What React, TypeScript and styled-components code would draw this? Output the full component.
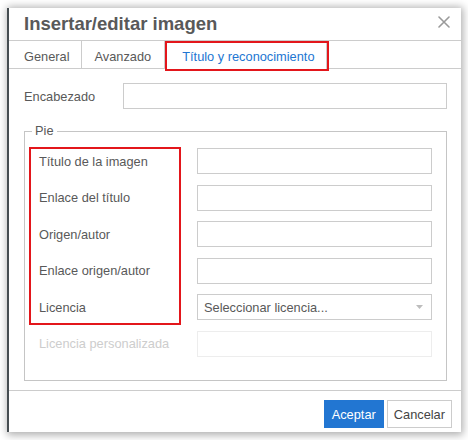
import styled, { createGlobalStyle } from 'styled-components';

const GlobalStyle = createGlobalStyle`
  html, body {
    margin: 0;
    background: #fff;
  }
  body {
    font-family: 'Liberation Sans', Arial, sans-serif;
    font-size: 12.8px;
    color: #595959;
  }
`;

const Page = styled.div`
  padding: 8px 7px 0 9px;
  height: 440px;
  box-sizing: border-box;
`;

const Dialog = styled.div`
  width: 452px;
  height: 424px;
  background: #fff;
  display: flex;
  flex-direction: column;
  box-shadow: -2px 0 0 #464d51, 0 1px 8px 2px rgba(0, 0, 0, 0.32);
`;

const Header = styled.div`
  display: flex;
  align-items: center;
  justify-content: space-between;
  height: 32px;
  padding: 0 11px 0 15px;
  border-bottom: 1px solid #cccccc;
`;

const Title = styled.h1`
  margin: 0;
  font-size: 18.5px;
  font-weight: bold;
  line-height: 32px;
  color: #595959;
`;

const CloseButton = styled.button`
  border: 0;
  background: none;
  padding: 0;
  width: 12px;
  height: 12px;
  margin-top: -4px;
  display: flex;
  cursor: pointer;
`;

const TabBar = styled.div`
  display: flex;
  align-items: flex-start;
  border-bottom: 1px solid #cccccc;
`;

const Tab = styled.div<{ $active?: boolean }>`
  height: 27px;
  box-sizing: border-box;
  padding: 8px ${(p) => (p.$active ? '14.5px' : '13px')} 4px;
  line-height: 15px;
  border-right: 1px solid #cccccc;
  color: ${(p) => (p.$active ? '#2276d2' : '#595959')};
  background: #fff;
  white-space: nowrap;
  &:first-child {
    padding-left: 15px;
    padding-right: 11px;
  }
`;

const TabHighlight = styled.div`
  border: 2px solid #e3161b;
  margin-bottom: -3px;
  height: 30px;
  box-sizing: border-box;
  background: #fff;
  & > div {
    height: 26px;
    padding-top: 6px;
  }
`;

const Body = styled.div`
  flex: 1;
  padding: 14px 14px 9px 15px;
  display: flex;
  flex-direction: column;
`;

const FormRow = styled.div`
  display: flex;
  align-items: center;
`;

const RowLabel = styled.label`
  width: 99px;
  flex-shrink: 0;
`;

const TextInput = styled.input`
  box-sizing: border-box;
  height: 26px;
  width: 100%;
  margin: 0;
  border: 1px solid #cccccc;
  border-radius: 0;
  background: #fff;
  font: inherit;
  padding: 0 5px;
  outline: none;
  &:disabled {
    border-color: #ededed;
    background: #fff;
  }
`;

const Fieldset = styled.fieldset`
  margin: 14px 0 0;
  padding: 9px 14px 23px;
  border: 1px solid #c5c5c5;
  min-width: 0;
`;

const Legend = styled.legend`
  margin-left: -7px;
  padding: 0 3px;
  line-height: 16px;
  color: #595959;
`;

const FieldGrid = styled.div`
  display: grid;
  grid-template-columns: 158px 235px;
  grid-auto-rows: 26px;
  row-gap: 10.6px;
`;

const LabelHighlight = styled.div`
  grid-column: 1;
  grid-row: 1 / 6;
  margin: -1px 16px -5px -10px;
  border: 2px solid #e3161b;
  pointer-events: none;
`;

const FieldLabel = styled.label<{ $row: number; $disabled?: boolean }>`
  grid-column: 1;
  grid-row: ${(p) => p.$row};
  align-self: center;
  color: ${(p) => (p.$disabled ? '#cdcdcd' : '#595959')};
`;

const FieldControl = styled.div<{ $row: number }>`
  grid-column: 2;
  grid-row: ${(p) => p.$row};
`;

const SelectBox = styled.div`
  box-sizing: border-box;
  height: 26px;
  border: 1px solid #cccccc;
  display: flex;
  align-items: center;
  justify-content: space-between;
  padding: 0 8px 0 6px;
  color: #595959;
  cursor: pointer;
`;

const Footer = styled.div`
  border-top: 1px solid #cccccc;
  padding: 9px 9px 4px;
  display: flex;
  justify-content: flex-end;
  gap: 3px;
`;

const Button = styled.button<{ $primary?: boolean }>`
  height: 28px;
  margin: 0;
  font: inherit;
  border-radius: 0;
  border: 1px solid ${(p) => (p.$primary ? '#2276d2' : '#cccccc')};
  background: ${(p) => (p.$primary ? '#2276d2' : '#fff')};
  color: ${(p) => (p.$primary ? '#fff' : '#444')};
  padding: 0 ${(p) => (p.$primary ? '7px' : '6px')};
  cursor: pointer;
`;

const fields = [
  'Título de la imagen',
  'Enlace del título',
  'Origen/autor',
  'Enlace origen/autor',
];

export default function App() {
  return (
    <>
      <GlobalStyle />
      <Page>
        <Dialog>
          <Header>
            <Title>Insertar/editar imagen</Title>
            <CloseButton aria-label="Cerrar">
              <svg width="12" height="12" viewBox="0 0 12 12">
                <path
                  d="M1 1 L11 11 M11 1 L1 11"
                  stroke="#9a9a9a"
                  strokeWidth="1.6"
                  strokeLinecap="round"
                />
              </svg>
            </CloseButton>
          </Header>

          <TabBar>
            <Tab>General</Tab>
            <Tab>Avanzado</Tab>
            <TabHighlight>
              <Tab $active>Título y reconocimiento</Tab>
            </TabHighlight>
          </TabBar>

          <Body>
            <FormRow>
              <RowLabel>Encabezado</RowLabel>
              <TextInput />
            </FormRow>

            <Fieldset>
              <Legend>Pie</Legend>
              <FieldGrid>
                <LabelHighlight />
                {fields.map((f, idx) => (
                  <FieldLabel key={f} $row={idx + 1}>
                    {f}
                  </FieldLabel>
                ))}
                {fields.map((f, idx) => (
                  <FieldControl key={f} $row={idx + 1}>
                    <TextInput />
                  </FieldControl>
                ))}
                <FieldLabel $row={5}>Licencia</FieldLabel>
                <FieldControl $row={5}>
                  <SelectBox>
                    <span>Seleccionar licencia...</span>
                    <svg width="7" height="4" viewBox="0 0 7 4">
                      <path d="M0 0 H7 L3.5 4 Z" fill="#bdbdbd" />
                    </svg>
                  </SelectBox>
                </FieldControl>
                <FieldLabel $row={6} $disabled>
                  Licencia personalizada
                </FieldLabel>
                <FieldControl $row={6}>
                  <TextInput disabled />
                </FieldControl>
              </FieldGrid>
            </Fieldset>
          </Body>

          <Footer>
            <Button $primary>Aceptar</Button>
            <Button>Cancelar</Button>
          </Footer>
        </Dialog>
      </Page>
    </>
  );
}
